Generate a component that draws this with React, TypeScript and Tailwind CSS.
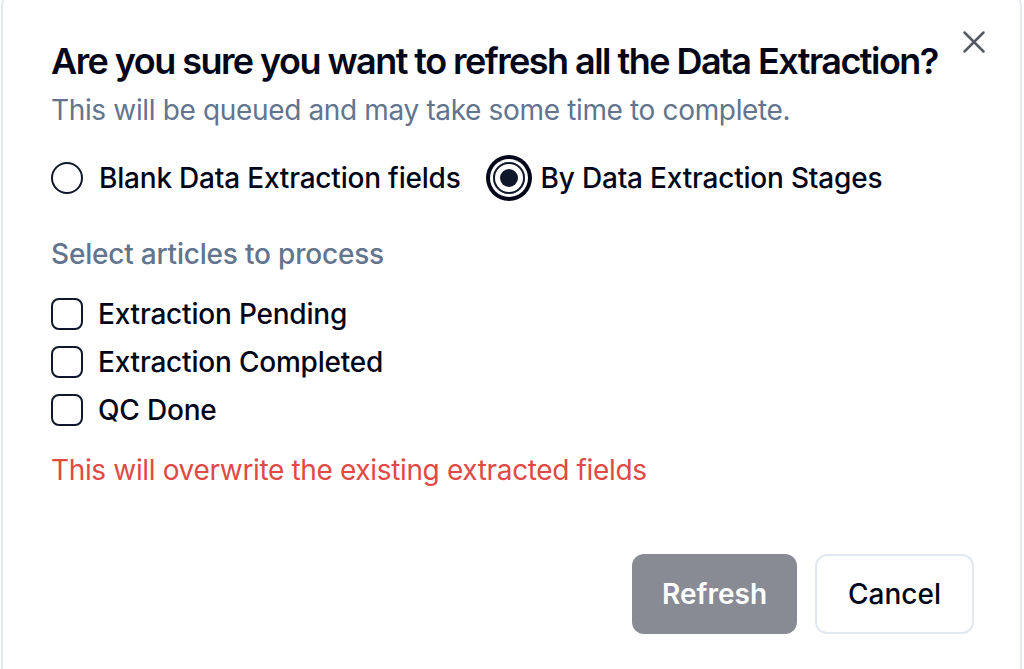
import { X } from 'lucide-react'

type StageOption = {
  id: string
  label: string
}

const stages: StageOption[] = [
  { id: 'pending', label: 'Extraction Pending' },
  { id: 'completed', label: 'Extraction Completed' },
  { id: 'qc', label: 'QC Done' },
]

const RadioItem = ({ label, checked }: { label: string; checked?: boolean }) => (
  <label className="flex items-center gap-[16px] cursor-pointer">
    <span
      className={
        checked
          ? 'flex h-8 w-8 items-center justify-center rounded-full border-2 border-slate-900 ring-4 ring-slate-950 ring-offset-3 ring-offset-white'
          : 'flex h-8 w-8 items-center justify-center rounded-full border-2 border-slate-900'
      }
    >
      {checked && <span className="h-[18px] w-[18px] rounded-full bg-slate-900" />}
    </span>
    <span className="text-[28px] font-medium leading-[40px] tracking-[-0.2px] text-slate-950">
      {label}
    </span>
  </label>
)

const App = () => {
  return (
    <div
      className="h-[669px] w-[1024px] overflow-hidden bg-white pl-px"
      style={{ fontFamily: 'Inter, "Noto Sans", sans-serif' }}
    >
      <div className="relative -mt-[10px] w-[1021px] rounded-[16px] border-2 border-[#e4e8ef] bg-white pl-[48px] pr-[46px] pt-[46px] pb-[60px]">
        <button className="absolute right-[27px] top-[31px] text-[#565a66]">
          <X size={38} strokeWidth={1.6} />
        </button>

        <div className="flex flex-col">
          <h2 className="whitespace-nowrap text-[36px] font-semibold leading-[46px] tracking-[-1.55px] text-slate-950">
            Are you sure you want to refresh all the Data Extraction?
          </h2>
          <p className="mt-[6px] text-[28px] leading-[40px] tracking-[-0.35px] text-slate-500">
            This will be queued and may take some time to complete.
          </p>
        </div>

        <div className="mt-[28px] flex items-center gap-8">
          <RadioItem label="Blank Data Extraction fields" />
          <RadioItem label="By Data Extraction Stages" checked />
        </div>

        <p className="mt-[36px] text-[28px] font-medium leading-[40px] tracking-[-0.2px] text-slate-500">
          Select articles to process
        </p>

        <div className="mt-[16px] flex flex-col">
          {stages.map((stage) => (
            <label key={stage.id} className="flex h-[48px] items-center gap-[15px]">
              <span className="h-8 w-8 rounded-[8px] border-2 border-slate-900" />
              <span className="text-[28px] font-medium leading-[40px] tracking-[-0.2px] text-slate-950">
                {stage.label}
              </span>
            </label>
          ))}
        </div>

        <p className="mt-[16px] text-[28px] leading-[40px] tracking-[-0.35px] text-[#e04a45]">
          This will overwrite the existing extracted fields
        </p>

        <div className="mt-[64px] flex justify-end gap-[18px]">
          <button
            disabled
            className="h-[80px] rounded-[12px] bg-[#888b94] px-[30px] text-[28px] font-semibold text-white"
          >
            Refresh
          </button>
          <button className="h-[80px] rounded-[12px] border-2 border-[#e2e8f0] bg-white px-[31px] text-[28px] font-medium text-slate-950">
            Cancel
          </button>
        </div>
      </div>
    </div>
  )
}

export default App
